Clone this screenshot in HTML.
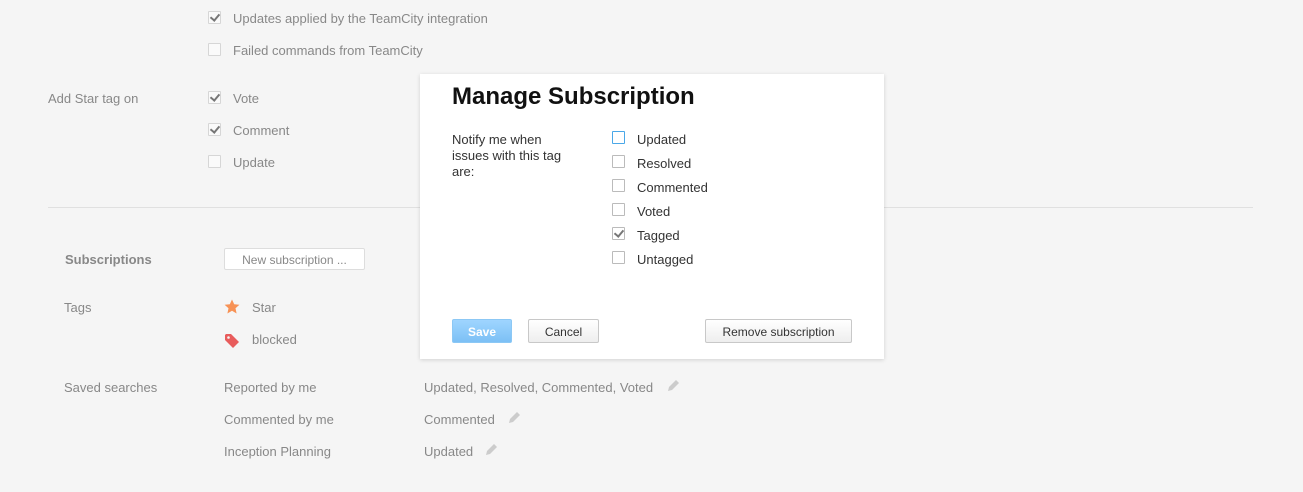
<!DOCTYPE html>
<html><head><style>
body{margin:0;width:1303px;height:492px;background:#f5f5f5;font-family:"Liberation Sans",Arial,sans-serif;font-size:13px;color:#888;position:relative;overflow:hidden}
.a{position:absolute;white-space:nowrap;line-height:16px;margin-top:1px}
.cb{position:absolute;width:11px;height:11px;border:1px solid #d6d6d6;background:#fafafa;border-radius:1px}
.cb.on::after{content:"";position:absolute;left:3px;top:0px;width:4px;height:7px;border:solid #777;border-width:0 2px 2px 0;transform:rotate(40deg)}
.dlg{position:absolute;left:420px;top:74px;width:464px;height:285px;background:#fff;box-shadow:0 1px 4px rgba(0,0,0,.15)}
.dlg .a{color:#333}
.dlg .cb{border-color:#bbb;background:#fff}
.btn{position:absolute;height:22px;border:1px solid #c8c8c8;border-radius:2px;background:linear-gradient(#fff,#eee);color:#333;font-size:12px;text-align:center;line-height:22px;box-sizing:border-box}
</style></head><body>
<div class="cb on" style="left:208px;top:11px"></div><div class="a" style="left:233px;top:10px">Updates applied by the TeamCity integration</div>
<div class="cb" style="left:208px;top:43px"></div><div class="a" style="left:233px;top:42px">Failed commands from TeamCity</div>
<div class="a" style="left:48px;top:90px">Add Star tag on</div>
<div class="cb on" style="left:208px;top:91px"></div><div class="a" style="left:233px;top:90px">Vote</div>
<div class="cb on" style="left:208px;top:123px"></div><div class="a" style="left:233px;top:122px">Comment</div>
<div class="cb" style="left:208px;top:155px"></div><div class="a" style="left:233px;top:154px">Update</div>
<div style="position:absolute;left:48px;top:207px;width:1205px;height:1px;background:#e0e0e0"></div>
<div class="a" style="left:65px;top:251px;font-weight:bold">Subscriptions</div>
<div class="btn" style="left:224px;top:248px;width:141px;color:#888;background:#fff;border-color:#ddd">New subscription ...</div>
<div class="a" style="left:64px;top:299px">Tags</div>
<svg style="position:absolute;left:224px;top:299px" width="16" height="16" viewBox="0 0 16 16"><path d="M8 0.5l2.2 4.8 5.2.5-3.9 3.5 1.1 5.2L8 11.8l-4.6 2.7 1.1-5.2L.6 5.8l5.2-.5z" fill="#f79256"/></svg>
<div class="a" style="left:252px;top:299px">Star</div>
<svg style="position:absolute;left:224px;top:333px" width="16" height="16" viewBox="0 0 16 16"><path d="M1 2v5l8 8 6-6-8-8H2z" fill="#e85c5c"/><circle cx="4.5" cy="4.5" r="1.3" fill="#f5f5f5"/></svg>
<div class="a" style="left:252px;top:331px">blocked</div>
<div class="a" style="left:64px;top:379px">Saved searches</div>
<div class="a" style="left:224px;top:379px">Reported by me</div><div class="a" style="left:424px;top:379px">Updated, Resolved, Commented, Voted</div>
<div class="a" style="left:224px;top:411px">Commented by me</div><div class="a" style="left:424px;top:411px">Commented</div>
<div class="a" style="left:224px;top:443px">Inception Planning</div><div class="a" style="left:424px;top:443px">Updated</div>
<svg style="position:absolute;left:666px;top:379px" width="14" height="14" viewBox="0 0 14 14"><path d="M2 12l1-4 7-7 3 3-7 7z" fill="#ccc"/></svg>
<svg style="position:absolute;left:507px;top:411px" width="14" height="14" viewBox="0 0 14 14"><path d="M2 12l1-4 7-7 3 3-7 7z" fill="#ccc"/></svg>
<svg style="position:absolute;left:484px;top:443px" width="14" height="14" viewBox="0 0 14 14"><path d="M2 12l1-4 7-7 3 3-7 7z" fill="#ccc"/></svg>
<div class="dlg">
<div class="a" style="left:32px;top:8px;font-size:24px;font-weight:bold;color:#111;line-height:28px">Manage Subscription</div>
<div class="a" style="left:32px;top:57px;line-height:16px;white-space:normal;width:130px">Notify me when issues with this tag are:</div>
<div class="cb" style="left:192px;top:57px;border-color:#4aa8e8"></div><div class="a" style="left:217px;top:57px">Updated</div>
<div class="cb" style="left:192px;top:81px"></div><div class="a" style="left:217px;top:81px">Resolved</div>
<div class="cb" style="left:192px;top:105px"></div><div class="a" style="left:217px;top:105px">Commented</div>
<div class="cb" style="left:192px;top:129px"></div><div class="a" style="left:217px;top:129px">Voted</div>
<div class="cb on" style="left:192px;top:153px"></div><div class="a" style="left:217px;top:153px">Tagged</div>
<div class="cb" style="left:192px;top:177px"></div><div class="a" style="left:217px;top:177px">Untagged</div>
<div class="btn" style="left:32px;top:245px;width:60px;height:24px;line-height:24px;border-color:#8cc8f5;background:linear-gradient(#9fd5ff,#7cc0f5);color:#fff;font-weight:bold">Save</div>
<div class="btn" style="left:108px;top:245px;width:71px;height:24px;line-height:24px">Cancel</div>
<div class="btn" style="left:285px;top:245px;width:147px;height:24px;line-height:24px">Remove subscription</div>
</div>
</body></html>
